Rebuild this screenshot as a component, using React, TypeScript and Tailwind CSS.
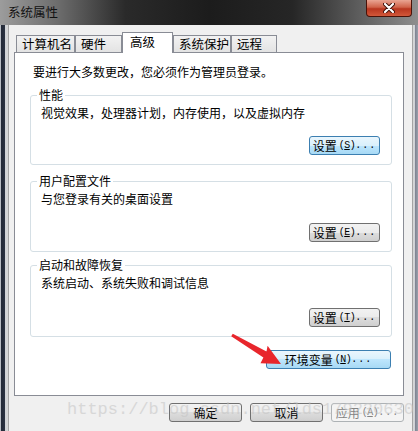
import React from 'react'

const cjk = "font-['Noto_Sans_CJK_SC','Noto_Sans',sans-serif]"

const Btn = ({ label, keyChar, blue, disabled, w }: { label: string; keyChar?: string; blue?: boolean; disabled?: boolean; w: string }) => {
  const tone = disabled
    ? 'border-[#adb2b5] bg-[#f4f4f4] text-[#838383]'
    : blue
      ? 'border-[#3c7fb1] bg-[linear-gradient(#eaf6fd_0%,#d9f0fc_50%,#bee6fd_50%,#a7d9f5_100%)] text-black'
      : 'border-[#707070] bg-[linear-gradient(#f2f2f2_0%,#ebebeb_50%,#dddddd_50%,#cfcfcf_100%)] text-black'
  return (
    <div className={`${w} h-[19px] rounded-[3px] border ${tone} flex items-center justify-center leading-none text-[12px]`}>
      <span>{label}</span>
      {keyChar && (
        <span className="font-['Liberation_Mono',monospace] text-[10px] ml-[2px] tracking-[-0.5px]">
          (<span className="underline">{keyChar}</span>)<span className="tracking-[1px]">...</span>
        </span>
      )}
    </div>
  )
}

const Group = ({ title, desc, btnKey, blue, cls }: { title: string; desc: string; btnKey: string; blue?: boolean; cls: string }) => (
  <div className={`relative mr-[11px] rounded-[3px] border border-[#d5dfe5] flex flex-col ${cls}`}>
    <span className="absolute left-[6px] top-[-9px] bg-white px-[2px] leading-[16px]">{title}</span>
    <div className="pl-[10px] pt-[9px] leading-[16px]">{desc}</div>
    <div className="mt-auto flex justify-end pr-[11px] pb-[9px]">
      <Btn label="设置" keyChar={btnKey} blue={blue} w="w-[71px]" />
    </div>
  </div>
)

const App = () => {
  const tabs = [
    { t: '计算机名', w: 'w-[59px]' },
    { t: '硬件', w: 'w-[47px]' },
    { t: '高级', w: 'w-[51px]', active: true },
    { t: '系统保护', w: 'w-[58px]' },
    { t: '远程', w: 'w-[46px]' },
  ]
  return (
    <div className={`relative w-[418px] h-[431px] overflow-hidden bg-[#f0f0f0] ${cjk} text-[12px] text-black`}>
      {/* glass title bar */}
      <div className="relative h-[25px] bg-[linear-gradient(90deg,#9c9c9c_0%,#6c6c6c_14%,#2a2a2a_30%,#1c1c1c_50%,#262626_70%,#5e5e5e_86%,#8e8e8e_100%)]">
        <span className="absolute left-[8px] top-[3px] text-[12.5px] leading-[18px] text-[#111]">系统属性</span>
        <div className="absolute right-[6px] top-0 w-[46px] h-[17px] rounded-b-[4px] border border-t-0 border-[#4a1208] bg-[linear-gradient(#e9a593_0%,#d0634a_45%,#b8361f_55%,#d2583a_100%)] flex items-center justify-center">
          <svg width="12" height="10" viewBox="0 0 12 10">
            <path d="M2 1 L10 9 M10 1 L2 9" stroke="#3a0c05" strokeWidth="4" strokeLinecap="round" />
            <path d="M2 1 L10 9 M10 1 L2 9" stroke="#ffffff" strokeWidth="2.2" strokeLinecap="round" />
          </svg>
        </div>
      </div>

      <div className="flex h-[406px]">
        <div className="w-[9px] bg-[linear-gradient(90deg,#b8bcc3_0px,#b8bcc3_1px,#222836_1px,#2c3342_5px,#cfd1d5_5px,#d8d8d8_8px,#a4a4a4_8px,#a4a4a4_9px)]" />

        <div className="flex-1 flex flex-col pt-[7px] pl-[5px] pr-[8px]">
          {/* tabs */}
          <div className="flex items-end h-[20px] ml-[2px]">
            {tabs.map((tab) =>
              tab.active ? (
                <div key={tab.t} className={`${tab.w} h-[21px] -mb-[1px] relative z-10 bg-white border border-b-0 border-[#898c95] pl-[7px] leading-[18px] text-[12.5px]`}>
                  {tab.t}
                </div>
              ) : (
                <div key={tab.t} className={`${tab.w} h-[17px] bg-[linear-gradient(#f2f2f2,#e3e3e3)] border border-b-0 border-[#898c95] pl-[5px] leading-[16px] text-[12.5px]`}>
                  {tab.t}
                </div>
              )
            )}
          </div>

          {/* panel */}
          <div className="w-[390px] h-[344px] bg-white border border-[#898c95] pl-[15px] pt-[11px] flex flex-col">
            <div className="pl-[3px] leading-[16px]">要进行大多数更改，您必须作为管理员登录。</div>
            <Group cls="mt-[15px] h-[70px]" title="性能" desc="视觉效果，处理器计划，内存使用，以及虚拟内存" btnKey="S" blue />
            <Group cls="mt-[16px] h-[71px]" title="用户配置文件" desc="与您登录有关的桌面设置" btnKey="E" />
            <Group cls="mt-[13px] h-[72px]" title="启动和故障恢复" desc="系统启动、系统失败和调试信息" btnKey="T" />
            <div className="mt-[13px] flex justify-end pr-[12px]">
              <Btn label="环境变量" keyChar="N" blue w="w-[125px]" />
            </div>
          </div>

          {/* dialog buttons */}
          <div className="mt-[7px] flex justify-end gap-[8px]">
            <Btn label="确定" w="w-[73px]" />
            <Btn label="取消" w="w-[73px]" />
            <Btn label="应用" keyChar="A" disabled w="w-[73px]" />
          </div>
        </div>

        <div className="w-[6px] bg-[linear-gradient(90deg,#a4a4a4_0px,#a4a4a4_1px,#d6d6d6_1px,#cfd1d6_3px,#7d8290_3px,#9aa0ab_6px)]" />
      </div>

      {/* red pointer arrow */}
      <svg className="absolute left-0 top-0 pointer-events-none" width="418" height="431">
        <polygon
          points="232.8,333.8 266.5,351.6 267.6,345.8 281,364 260.5,363.2 263.4,357.6 231.2,336.2"
          fill="#e8262c"
        />
      </svg>

      {/* watermark */}
      <div className="absolute left-[67px] top-[400px] font-['Liberation_Mono',monospace] text-[17px] leading-[20px] text-[#c4c4c4] opacity-55 pointer-events-none whitespace-nowrap">
        https://blog.csdn.net/lds179230630
      </div>
    </div>
  )
}

export default App
